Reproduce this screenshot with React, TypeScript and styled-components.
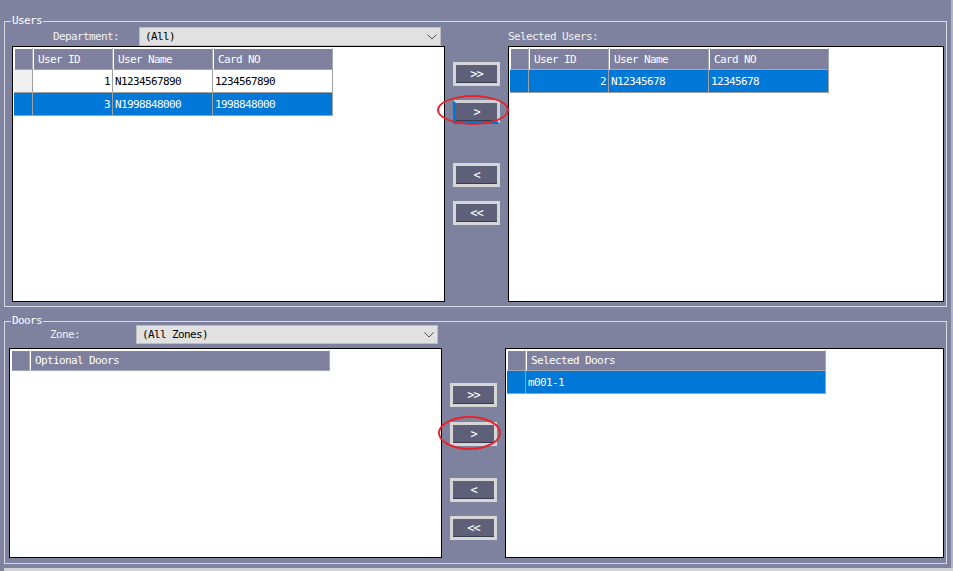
import styled, { createGlobalStyle } from "styled-components";

const GlobalStyle = createGlobalStyle`
  html, body {
    margin: 0;
    padding: 0;
    background: #7f829f;
  }
`;

const font = `
  font-family: "DejaVu Sans Mono", "Liberation Mono", "Noto Sans CJK SC", monospace;
  font-size: 11px;
  letter-spacing: -0.62px;
`;

const Window = styled.div`
  width: 953px;
  height: 571px;
  box-sizing: border-box;
  background: #7f829f;
  padding: 15px 0 0 4px;
  display: flex;
  flex-direction: column;
  overflow: hidden;
  box-shadow: inset -2px 0 0 #b4b5c4;
  ${font}
`;

const GroupBox = styled.fieldset<{ $mt?: number }>`
  margin: ${(p) => p.$mt ?? 0}px 0 0 0;
  padding: 0;
  width: 943px;
  min-width: 0;
  box-sizing: border-box;
  border: 1px solid #d9d9e3;
`;

const Legend = styled.legend`
  margin-left: 6px;
  padding: 0 1px;
  height: 12px;
  line-height: 12px;
  color: #fff;
  ${font}
`;

const Body = styled.div<{ $cols: string; $rows: string; $pad: string; $mt?: number }>`
  display: grid;
  grid-template-columns: ${(p) => p.$cols};
  grid-template-rows: ${(p) => p.$rows};
  row-gap: ${(p) => (p.$mt ? 4 : 0)}px;
  padding: ${(p) => p.$pad};
  margin-top: ${(p) => p.$mt ?? 0}px;
`;

const Toolbar = styled.div`
  display: flex;
  align-items: center;
`;

const FieldLabel = styled.span<{ $w?: number; $ml?: number }>`
  margin-left: ${(p) => p.$ml ?? 0}px;
  width: ${(p) => (p.$w ? `${p.$w}px` : "auto")};
  color: #f2f2f2;
  white-space: nowrap;
`;

const Combo = styled.div`
  width: 302px;
  height: 19px;
  box-sizing: border-box;
  background: #e1e1e1;
  border: 1px solid #bdbdbd;
  display: flex;
  align-items: center;
  justify-content: space-between;
  padding: 0 3px 0 5px;
  color: #000;
`;

const Spacer = styled.div``;

const GridBox = styled.div`
  background: #fff;
  border: 1px solid #000;
  padding: 1px;
  box-sizing: border-box;
  height: 100%;
  overflow: hidden;
`;

const Row = styled.div<{ $h: number }>`
  display: flex;
  height: ${(p) => p.$h}px;
`;

const HeadCell = styled.div<{ $w: number }>`
  width: ${(p) => p.$w}px;
  flex: none;
  box-sizing: border-box;
  background: #7e809e;
  border-left: 1px solid #fff;
  border-top: 1px solid #fff;
  border-right: 1px solid #a6a7b6;
  border-bottom: 1px solid #a6a7b6;
  color: #fff;
  padding-left: 4px;
  display: flex;
  align-items: center;
  white-space: nowrap;
`;

const RowHead = styled.div<{ $sel: boolean }>`
  width: 19px;
  flex: none;
  box-sizing: border-box;
  background: ${(p) => (p.$sel ? "#0078d7" : "#f0f0f0")};
  border-right: 1px solid #a0a0a0;
  border-bottom: 1px solid #a0a0a0;
`;

const Cell = styled.div<{ $w: number; $sel: boolean; $right?: boolean }>`
  width: ${(p) => p.$w}px;
  flex: none;
  box-sizing: border-box;
  background: ${(p) => (p.$sel ? "#0078d7" : "#fff")};
  color: ${(p) => (p.$sel ? "#fff" : "#000")};
  border-right: 1px solid #a0a0a0;
  border-bottom: 1px solid #a0a0a0;
  padding: 0 2px;
  display: flex;
  align-items: center;
  justify-content: ${(p) => (p.$right ? "flex-end" : "flex-start")};
  white-space: nowrap;
`;

const ButtonStack = styled.div`
  display: flex;
  flex-direction: column;
  align-items: center;
`;

const ButtonSlot = styled.div<{ $mt: number }>`
  position: relative;
  margin-top: ${(p) => p.$mt}px;
`;

const ArrowButton = styled.button<{ $focus?: boolean }>`
  width: 47px;
  height: 24px;
  box-sizing: border-box;
  padding: 0 0 1px;
  margin: 0;
  border: 3px solid #d6d6d6;
  border-color: ${(p) =>
    p.$focus ? "#cfcfd6 #cfcfd6 #0078d7 #0078d7" : "#d6d6d6"};
  background: #5e5f78;
  box-shadow: inset 0 -1px 0 #383a4e;
  color: #fff;
  display: flex;
  align-items: center;
  justify-content: center;
  ${font}
  font-size: 12px;
  letter-spacing: -1px;
`;

const Ellipse = styled.span<{ $l: number; $t: number; $w: number; $h: number }>`
  position: absolute;
  left: ${(p) => p.$l}px;
  top: ${(p) => p.$t}px;
  width: ${(p) => p.$w}px;
  height: ${(p) => p.$h}px;
  box-sizing: border-box;
  border: 2px solid #e5232b;
  border-radius: 50%;
  pointer-events: none;
`;

const BottomStrip = styled.div`
  margin-top: 4px;
  height: 3px;
  background: #d2d2d6;
`;

type Col = { title: string; width: number; right?: boolean };

function DataGrid({
  cols,
  rows,
  selected,
  headH,
  rowH,
}: {
  cols: Col[];
  rows: string[][];
  selected: number;
  headH: number;
  rowH: number;
}) {
  return (
    <GridBox>
      <Row $h={headH}>
        <HeadCell $w={19} />
        {cols.map((c) => (
          <HeadCell key={c.title} $w={c.width}>
            {c.title}
          </HeadCell>
        ))}
      </Row>
      {rows.map((r, i) => (
        <Row key={i} $h={rowH}>
          <RowHead $sel={i === selected} />
          {cols.map((c, j) => (
            <Cell key={j} $w={c.width} $sel={i === selected} $right={c.right}>
              {r[j]}
            </Cell>
          ))}
        </Row>
      ))}
    </GridBox>
  );
}

const Chevron = () => (
  <svg width="10" height="6" viewBox="0 0 10 6">
    <polyline points="0.5,0.5 5,5 9.5,0.5" fill="none" stroke="#4a4a4a" strokeWidth="1" />
  </svg>
);

const userCols: Col[] = [
  { title: "User ID", width: 80, right: true },
  { title: "User Name", width: 100 },
  { title: "Card NO", width: 120 },
];

export default function App() {
  return (
    <>
      <GlobalStyle />
      <Window>
        <GroupBox>
          <Legend>Users</Legend>
          <Body $cols="433px 63px 436px" $rows="19px 256px" $pad="0 2px 4px 7px">
            <Toolbar>
              <FieldLabel $ml={41} $w={86}>
                Department:
              </FieldLabel>
              <Combo>
                <span>(All)</span>
                <Chevron />
              </Combo>
            </Toolbar>
            <Spacer />
            <Toolbar>
              <FieldLabel>Selected Users:</FieldLabel>
            </Toolbar>
            <DataGrid
              cols={userCols}
              rows={[
                ["1", "N1234567890", "1234567890"],
                ["3", "N1998848000", "1998848000"],
              ]}
              selected={1}
              headH={22}
              rowH={23}
            />
            <ButtonStack>
              <ButtonSlot $mt={16}>
                <ArrowButton>&gt;&gt;</ArrowButton>
              </ButtonSlot>
              <ButtonSlot $mt={14}>
                <ArrowButton $focus>&gt;</ArrowButton>
                <Ellipse $l={-16} $t={-5} $w={72} $h={30} />
              </ButtonSlot>
              <ButtonSlot $mt={39}>
                <ArrowButton>&lt;</ArrowButton>
              </ButtonSlot>
              <ButtonSlot $mt={14}>
                <ArrowButton>&lt;&lt;</ArrowButton>
              </ButtonSlot>
            </ButtonStack>
            <DataGrid
              cols={userCols}
              rows={[["2", "N12345678", "12345678"]]}
              selected={0}
              headH={22}
              rowH={23}
            />
          </Body>
        </GroupBox>

        <GroupBox $mt={8}>
          <Legend>Doors</Legend>
          <Body $cols="433px 63px 439px" $rows="19px 210px" $pad="0 2px 5px 4px" $mt={-2}>
            <Toolbar>
              <FieldLabel $ml={41} $w={86}>
                Zone:
              </FieldLabel>
              <Combo>
                <span>(All Zones)</span>
                <Chevron />
              </Combo>
            </Toolbar>
            <Spacer />
            <Spacer />
            <DataGrid
              cols={[{ title: "Optional Doors", width: 300 }]}
              rows={[]}
              selected={-1}
              headH={21}
              rowH={23}
            />
            <ButtonStack>
              <ButtonSlot $mt={35}>
                <ArrowButton>&gt;&gt;</ArrowButton>
              </ButtonSlot>
              <ButtonSlot $mt={15}>
                <ArrowButton>&gt;</ArrowButton>
                <Ellipse $l={-12} $t={-6} $w={63} $h={34} />
              </ButtonSlot>
              <ButtonSlot $mt={32}>
                <ArrowButton>&lt;</ArrowButton>
              </ButtonSlot>
              <ButtonSlot $mt={14}>
                <ArrowButton>&lt;&lt;</ArrowButton>
              </ButtonSlot>
            </ButtonStack>
            <DataGrid
              cols={[{ title: "Selected Doors", width: 300 }]}
              rows={[["m001-1"]]}
              selected={0}
              headH={21}
              rowH={23}
            />
          </Body>
        </GroupBox>
        <BottomStrip />
      </Window>
    </>
  );
}
